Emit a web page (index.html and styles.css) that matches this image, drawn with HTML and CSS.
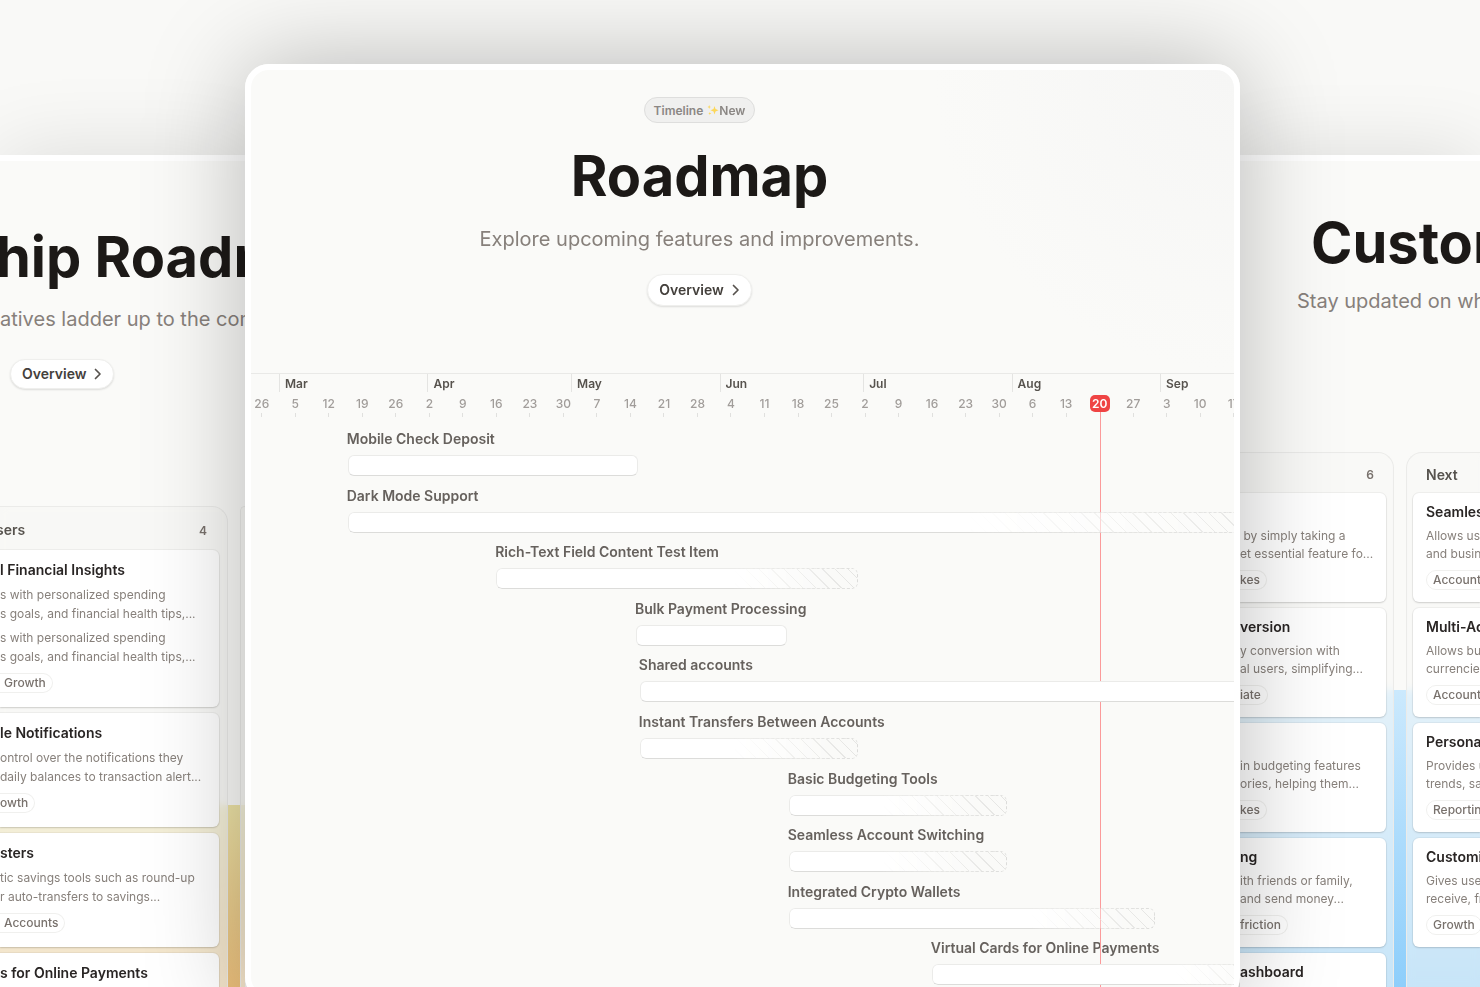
FILE: index.html
```html
<!DOCTYPE html>
<html lang="en">
<head>
<meta charset="utf-8">
<title>Roadmap</title>
<link rel="stylesheet" href="styles.css">
</head>
<body>
<div class="stage">

  <section class="window side left">
    <header class="hero">
      <h2 class="title bleed">hip Roadm</h2>
      <p class="subtitle">atives ladder up to the com</p>
      <button class="overview" type="button">Overview
        <svg class="chevron" viewBox="0 0 8 12" aria-hidden="true"><path d="M1.5 1.500 6 6 1.500 10.500"/></svg>
      </button>
    </header>
    <div class="board gold">
      <div class="column">
        <div class="column-head"><h3 class="bleed">sers</h3><span class="count">4</span></div>
        <article class="card">
          <h4>l Financial Insights</h4>
          <p>s with personalized spending<br>s goals, and financial health tips,...</p>
          <p>s with personalized spending<br>s goals, and financial health tips,...</p>
          <span class="tag">Growth</span>
        </article>
        <article class="card">
          <h4>le Notifications</h4>
          <p>ontrol over the notifications they<br>daily balances to transaction alert...</p>
          <span class="tag cut">owth</span>
        </article>
        <article class="card">
          <h4>sters</h4>
          <p>tic savings tools such as round-up<br>r auto-transfers to savings...</p>
          <span class="tag">Accounts</span>
        </article>
        <article class="card">
          <h4>s for Online Payments</h4>
        </article>
      </div>
      <div class="column"></div>
    </div>
  </section>

  <main class="window main">
    <header class="hero">
      <span class="badge">Timeline
        <svg class="sparkle" viewBox="0 0 12 12" aria-hidden="true"><path d="M7.5 2 8.500 5 11.500 6.200 8.500 7.400 7.500 10.600 6.500 7.400 3.500 6.200 6.500 5ZM2.200 1 2.700 2.500 4 3 2.700 3.500 2.200 5 1.700 3.500.4 3 1.700 2.500ZM2.800 8 3.200 9.100 4.300 9.500 3.200 9.900 2.800 11 2.400 9.900 1.300 9.500 2.400 9.100Z"/></svg>New</span>
      <h1 class="title">Roadmap</h1>
      <p class="subtitle">Explore upcoming features and improvements.</p>
      <button class="overview" type="button">Overview
        <svg class="chevron" viewBox="0 0 8 12" aria-hidden="true"><path d="M1.5 1.500 6 6 1.500 10.500"/></svg>
      </button>
    </header>

    <div class="timeline">
      <div class="months">
        <span style="--days:31">Mar</span><span style="--days:30">Apr</span><span style="--days:31">May</span><span style="--days:30">Jun</span><span style="--days:31">Jul</span><span style="--days:31">Aug</span><span style="--days:30">Sep</span>
      </div>
      <div class="weeks">
        <span>26</span><span>5</span><span>12</span><span>19</span><span>26</span><span>2</span><span>9</span><span>16</span><span>23</span><span>30</span><span>7</span><span>14</span><span>21</span><span>28</span><span>4</span><span>11</span><span>18</span><span>25</span><span>2</span><span>9</span><span>16</span><span>23</span><span>30</span><span>6</span><span>13</span><span class="today"><b>20</b></span><span>27</span><span>3</span><span>10</span><span>17</span>
      </div>
      <div class="rows">
        <div class="row" style="--start:20.2;--days:60.6"><h3>Mobile Check Deposit</h3><div class="bar"></div></div>
        <div class="row" style="--start:20.2;--days:200"><h3>Dark Mode Support</h3><div class="bar open long"></div></div>
        <div class="row" style="--start:51.2;--days:75.6"><h3>Rich-Text Field Content Test Item</h3><div class="bar open"></div></div>
        <div class="row" style="--start:80.4;--days:31.6"><h3>Bulk Payment Processing</h3><div class="bar"></div></div>
        <div class="row" style="--start:81.2;--days:150"><h3>Shared accounts</h3><div class="bar"></div></div>
        <div class="row" style="--start:81.2;--days:45.6"><h3>Instant Transfers Between Accounts</h3><div class="bar open"></div></div>
        <div class="row" style="--start:112.3;--days:45.6"><h3>Basic Budgeting Tools</h3><div class="bar open"></div></div>
        <div class="row" style="--start:112.3;--days:45.6"><h3>Seamless Account Switching</h3><div class="bar open"></div></div>
        <div class="row" style="--start:112.3;--days:76.6"><h3>Integrated Crypto Wallets</h3><div class="bar open"></div></div>
        <div class="row" style="--start:142.2;--days:76.6"><h3>Virtual Cards for Online Payments</h3><div class="bar open"></div></div>
      </div>
      <div class="today-line"></div>
    </div>
  </main>

  <section class="window side right">
    <header class="hero">
      <h2 class="title">Custom</h2>
      <p class="subtitle">Stay updated on what</p>
    </header>
    <div class="board blue">
      <div class="column">
        <div class="column-head"><span class="count">6</span></div>
        <article class="card">
          <h4></h4>
          <p>&nbsp;by simply taking a<br>et essential feature fo...</p>
          <span class="tag cut">kes</span>
        </article>
        <article class="card">
          <h4>version</h4>
          <p>y conversion with<br>al users, simplifying...</p>
          <span class="tag cut">iate</span>
        </article>
        <article class="card">
          <h4></h4>
          <p>in budgeting features<br>ories, helping them...</p>
          <span class="tag cut">kes</span>
        </article>
        <article class="card">
          <h4>ng</h4>
          <p>ith friends or family,<br>and send money...</p>
          <span class="tag cut">friction</span>
        </article>
        <article class="card">
          <h4>ashboard</h4>
        </article>
      </div>
      <div class="column next">
        <div class="column-head"><h3>Next</h3></div>
        <article class="card">
          <h4>Seamless</h4>
          <p>Allows use<br>and busin</p>
          <span class="tag">Accounts</span>
        </article>
        <article class="card">
          <h4>Multi-Ac</h4>
          <p>Allows bus<br>currencies</p>
          <span class="tag">Accounts</span>
        </article>
        <article class="card">
          <h4>Personal</h4>
          <p>Provides u<br>trends, sav</p>
          <span class="tag">Reporting</span>
        </article>
        <article class="card">
          <h4>Customi</h4>
          <p>Gives use<br>receive, fr</p>
          <span class="tag">Growth</span>
        </article>
      </div>
    </div>
  </section>

</div>
</body>
</html>
```
FILE: styles.css
```css
* { box-sizing: border-box; }

body {
  margin: 0;
  background: #f9f9f7;
  color: #57534e;
  font-family: Inter, "Liberation Sans", sans-serif;
}

h1, h2, h3, h4, p { margin: 0; }

/* Three overlapping windows, the middle one in front */
.stage {
  display: grid;
  grid-template-columns: 245px minmax(0, 1fr) 240px;
  grid-template-rows: minmax(0, 1fr);
  height: 100vh;
  overflow: hidden;
}

.window {
  display: flex;
  flex-direction: column;
  min-width: 0;
  background: #fafaf8;
  border: 6px solid #fff;
}

.main {
  position: relative;
  z-index: 1;
  margin: 64px 0 -14px;
  border-radius: 24px;
  background: radial-gradient(circle at 100% 0, #f6f6f5, #fafaf8 300px);
  box-shadow: 0 0 100px rgba(0, 0, 0, 0.27);
}

.side {
  margin-top: 155px;
  border-width: 6px 0 0;
  white-space: nowrap;
  box-shadow: 0 0 80px rgba(0, 0, 0, 0.12);
}

/* Hero */
.hero {
  display: flex;
  flex-direction: column;
  align-items: center;
}

.main .hero { padding: 27px 86px 67px 0; }

.badge {
  display: inline-flex;
  align-items: center;
  height: 26px;
  padding: 0 9px;
  border: 1px solid #dededd;
  border-radius: 13px;
  background: #f0f0ef;
  color: #8b8784;
  font-size: 12px;
  font-weight: 600;
}

.sparkle { width: 12px; height: 12px; margin-left: 4px; fill: #fcd75a; }

.title {
  color: #1c1917;
  font-size: 56px;
  font-weight: 700;
  line-height: 64px;
}

.main .title { margin-top: 21px; }

.subtitle {
  color: #87807b;
  font-size: 20px;
  line-height: 28px;
}

.main .subtitle { margin: 17px 0 21px; }

.overview {
  display: inline-flex;
  align-items: center;
  gap: 8px;
  height: 32px;
  padding: 0 11px;
  border: 1px solid #efefed;
  border-radius: 16px;
  background: #fff;
  box-shadow: 0 1px 2px rgba(0, 0, 0, 0.12);
  color: #44403c;
  font: 600 14px/20px Inter, sans-serif;
}

.chevron {
  width: 8px;
  height: 12px;
  fill: none;
  stroke: #57534e;
  stroke-width: 1.7;
  stroke-linecap: round;
  stroke-linejoin: round;
}

/* Timeline: the window spans 205.3 days */
.timeline {
  --day: calc(100% / 205.3);
  position: relative;
  flex: 1;
  display: flex;
  flex-direction: column;
  min-height: 0;
  overflow: hidden;
  border-top: 1px solid #e9e9e7;
}

.months {
  display: flex;
  padding-left: 28px;
}

.months span {
  flex: none;
  width: calc(var(--days) * 0.5014%);
  padding: 1px 0 0 5px;
  border-left: 1px solid #e4e4e2;
  font-size: 12px;
  font-weight: 600;
  line-height: 17px;
}

.weeks {
  display: flex;
  margin: 3px 0 12px -6px;
}

.weeks span {
  flex: none;
  width: 3.389%;
  color: #a19d9a;
  font-size: 12px;
  font-weight: 500;
  line-height: 18px;
  text-align: center;
}

.weeks span::after {
  content: "";
  display: block;
  width: 1px;
  height: 4px;
  margin: 0 auto;
  background: #e0e0de;
}

.weeks b {
  display: inline-block;
  min-width: 20px;
  border-radius: 5px;
  background: #ef4444;
  color: #fff;
  font-weight: 600;
  line-height: 17px;
}

.weeks .today::after { background: none; }

.rows {
  flex: 1;
  display: grid;
  grid-auto-rows: minmax(0, 1fr);
  min-height: 0;
}

.row {
  padding-left: calc(var(--start) * var(--day));
  white-space: nowrap;
}

.row h3 {
  margin-left: -1px;
  color: #66615d;
  font-size: 14px;
  font-weight: 600;
  line-height: 20px;
}

.bar {
  position: relative;
  z-index: 2;
  width: calc(var(--days) * 100% / (205.3 - var(--start)));
  height: 21px;
  margin-top: 6px;
}

.bar::before,
.bar::after {
  content: "";
  position: absolute;
  inset: 0;
  border-radius: 6px;
}

.bar::before {
  border: 1px solid #ebebe9;
  border-bottom-color: #dcdcda;
  background: #fff;
}

.open { --fade: 125px; }
.long { --fade: 340px; }

.open::before {
  mask-image: linear-gradient(to right, #000 calc(100% - var(--fade)), transparent calc(100% - 20px));
}

.open::after {
  border: 1px dashed #dcdcda;
  background: repeating-linear-gradient(45deg, #e4e4e2 0 1px, transparent 1px 9px);
  mask-image: linear-gradient(to right, transparent calc(100% - var(--fade)), #000);
}

.today-line {
  position: absolute;
  top: 38px;
  bottom: 0;
  left: 86.4%;
  width: 1px;
  background: #fb9a9a;
}

/* Side windows */
.left .hero {
  align-items: flex-start;
  padding: 64px 0 117px;
}

.bleed { margin-left: -4px; }

.left .subtitle { margin: 16px 0 26px; }

.left .overview { height: 30px; margin-left: 10px; }

.right .hero {
  align-items: flex-start;
  padding: 50px 0 137px 57px;
}

.right .title { padding-left: 14px; }
.right .subtitle { margin-top: 12px; }

.board {
  flex: 1;
  display: grid;
  gap: 12px;
}

.gold {
  grid-template-columns: minmax(0, 1fr) 5px;
  background: linear-gradient(#ece2a6, #eabc78 190px) 0 299px no-repeat;
}

.blue {
  grid-template-columns: 154px minmax(0, 1fr);
  background: linear-gradient(#cbe9fd, #8dcefb 300px) 0 238px no-repeat;
}

.column {
  display: flex;
  flex-direction: column;
  gap: 6px;
  border: 1px solid #ebebe9;
  border-width: 1px 1px 0 0;
  border-radius: 0 16px 0 0;
  background: rgba(247, 247, 245, 0.55);
  backdrop-filter: blur(4px);
}

.gold .column { padding-right: 8px; background: rgba(247, 247, 245, 0.65); }
.gold .column + .column { padding: 0; border-width: 1px 0 0 1px; border-radius: 16px 0 0; }
.blue .column { padding-right: 7px; }

.blue .next {
  padding: 0 0 0 6px;
  border-width: 1px 0 0 1px;
  border-radius: 16px 0 0;
  overflow: hidden;
}

.column-head {
  display: flex;
  align-items: center;
  justify-content: space-between;
  height: 37px;
  margin-bottom: -3px;
  padding: 6px 12px 0 0;
}

.gold .column-head { height: 40px; }
.next .column-head { padding-left: 13px; }

.column-head h3 {
  font-size: 14px;
  font-weight: 600;
  line-height: 20px;
}

.count {
  margin-left: auto;
  color: #78716c;
  font-size: 12px;
  font-weight: 600;
}

.card {
  padding: 9px 0 12px;
  border-radius: 0 6px 6px 0;
  background: #fff;
  box-shadow: 0 0 0 1px rgba(0, 0, 0, 0.04), 0 1px 2px rgba(0, 0, 0, 0.14);
}

.gold .card { padding: 10px 0 14px; }
.next .card { padding-left: 13px; border-radius: 6px 0 0 6px; }

.card h4 {
  min-height: 20px;
  color: #292524;
  font-size: 14px;
  font-weight: 600;
  line-height: 20px;
}

.card p {
  margin-top: 5px;
  color: #87807b;
  font-size: 12px;
  line-height: 18px;
}

.gold .card p { line-height: 19px; }

.tag {
  display: table;
  margin-top: 7px;
  padding: 0 6px;
  border: 1px solid #f0f0ee;
  border-radius: 10px;
  color: #78716c;
  font-size: 12px;
  font-weight: 500;
  line-height: 18px;
}

.gold .tag { padding-left: 4px; border-left: 0; border-radius: 0 10px 10px 0; }
.gold .cut,
.blue .cut { padding-left: 0; border-left: 0; border-radius: 0 10px 10px 0; }
```
